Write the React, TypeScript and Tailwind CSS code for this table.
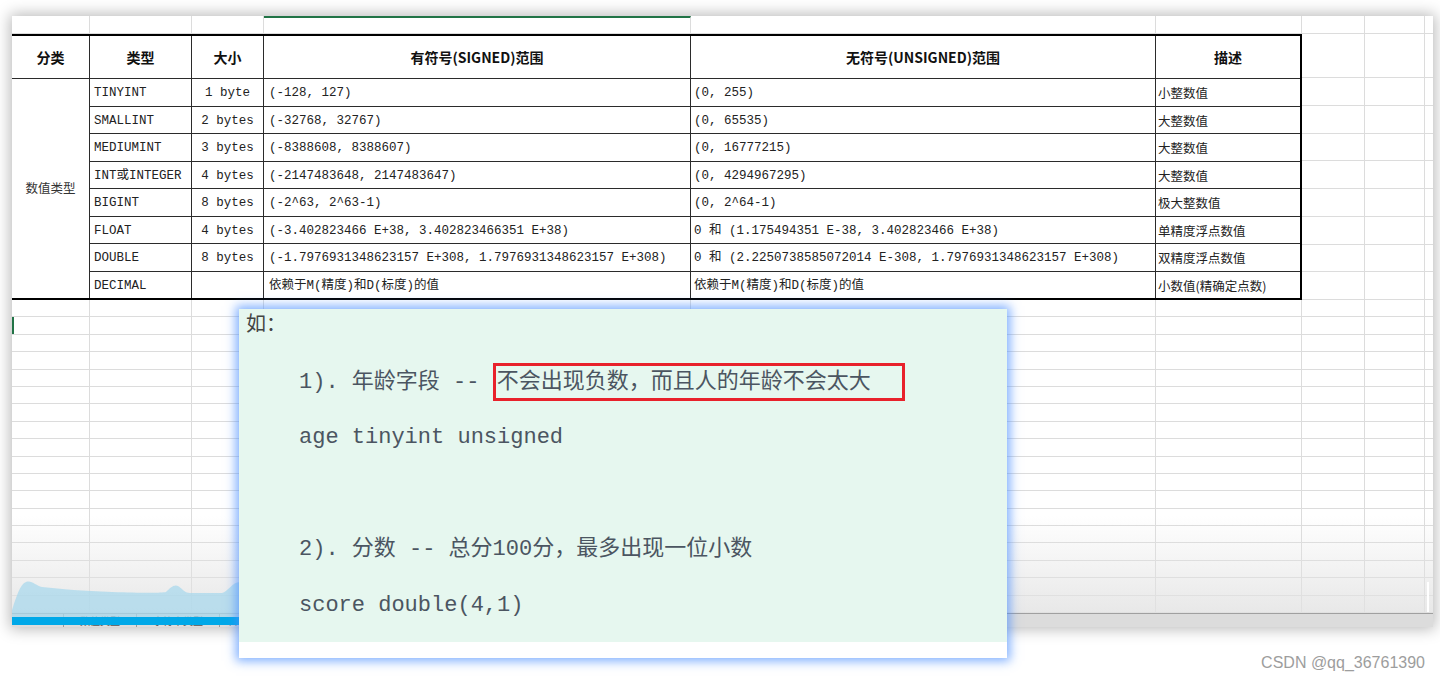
import React from "react";

const cols = [78, 102, 72, 427, 465, 146, 63, 60];

const rows: Array<[string, string, string, string, string]> = [
  ["TINYINT", "1 byte", "(-128, 127)", "(0, 255)", "小整数值"],
  ["SMALLINT", "2 bytes", "(-32768, 32767)", "(0, 65535)", "大整数值"],
  ["MEDIUMINT", "3 bytes", "(-8388608, 8388607)", "(0, 16777215)", "大整数值"],
  ["INT或INTEGER", "4 bytes", "(-2147483648, 2147483647)", "(0, 4294967295)", "大整数值"],
  ["BIGINT", "8 bytes", "(-2^63, 2^63-1)", "(0, 2^64-1)", "极大整数值"],
  [
    "FLOAT",
    "4 bytes",
    "(-3.402823466 E+38, 3.402823466351 E+38)",
    "0 和 (1.175494351 E-38, 3.402823466 E+38)",
    "单精度浮点数值",
  ],
  [
    "DOUBLE",
    "8 bytes",
    "(-1.7976931348623157 E+308, 1.7976931348623157 E+308)",
    "0 和 (2.2250738585072014 E-308, 1.7976931348623157 E+308)",
    "双精度浮点数值",
  ],
  ["DECIMAL", "", "依赖于M(精度)和D(标度)的值", "依赖于M(精度)和D(标度)的值", "小数值(精确定点数)"],
];

const headers = ["分类", "类型", "大小", "有符号(SIGNED)范围", "无符号(UNSIGNED)范围", "描述"];

function GridRow({ h, top }: { h: string; top?: boolean }) {
  return (
    <div className={`flex ${h}`}>
      {cols.map((w, i) => (
        <div
          key={i}
          style={{ width: w }}
          className={
            top && i === 3
              ? "shrink-0 border-r border-b border-[#dcdcdc] border-t-2 border-t-[#217346]"
              : "shrink-0 border-r border-b border-[#dcdcdc]"
          }
        />
      ))}
      <div className="flex-1 border-b border-[#dcdcdc]" />
    </div>
  );
}

export default function App() {
  const mono = "font-['Liberation_Mono','Noto_Sans_CJK_SC',monospace]";
  return (
    <div className="relative w-[1440px] h-[681px] bg-white overflow-hidden pt-[16px] pl-[12px]">
      {/* spreadsheet window */}
      <div className="relative w-[1421px] h-[611px] bg-white overflow-hidden shadow-[0_0_14px_2px_rgba(0,0,0,0.28)]">
        <GridRow h="h-[18px]" top />

        <div className="flex">
          <div
            className={`grid grid-cols-[77px_101px_71px_426px_464px_144px] grid-rows-[42px_repeat(8,26.5px)] gap-px bg-[#2b2b2b] border-t-2 border-b-2 border-r-2 border-black ${mono} text-[12.5px] text-[#222]`}
          >
            {headers.map((t) => (
              <div
                key={t}
                className="bg-white flex items-center justify-center font-['Noto_Sans_CJK_SC',sans-serif] font-bold text-[14px] text-[#111]"
              >
                {t}
              </div>
            ))}
            <div className="row-span-8 bg-white flex items-center justify-center font-['Noto_Sans_CJK_SC',sans-serif] text-[12.5px] text-[#333]">
              数值类型
            </div>
            {rows.map((r) => (
              <React.Fragment key={r[0]}>
                <div className="bg-white flex items-center pl-1 pt-[3px] whitespace-pre">{r[0]}</div>
                <div className="bg-white flex items-center justify-center pt-[3px] whitespace-pre">{r[1]}</div>
                <div className="bg-white flex items-center pl-[5px] pt-[3px] whitespace-pre">{r[2]}</div>
                <div className="bg-white flex items-center pl-[3px] pt-[3px] whitespace-pre">{r[3]}</div>
                <div className="bg-white flex items-center pl-[2px] pt-[3px] whitespace-pre font-['Noto_Sans_CJK_SC',sans-serif]">
                  {r[4]}
                </div>
              </React.Fragment>
            ))}
          </div>
          <div className="flex-1 grid grid-cols-[63px_60px_1fr] grid-rows-[44px_repeat(8,27.75px)]">
            {Array.from({ length: 27 }).map((_, i) => (
              <div
                key={i}
                className={i % 3 === 2 ? "border-b border-[#dcdcdc]" : "border-r border-b border-[#dcdcdc]"}
              />
            ))}
          </div>
        </div>

        {Array.from({ length: 18 }).map((_, i) => (
          <GridRow key={i} h="h-[17.4px]" />
        ))}

        {/* sheet tab bar */}
        <div className="h-[14px] bg-[#dcdcdc] border-t border-[#a0a0a0] flex items-center text-[10px] text-[#555] font-['Noto_Sans_CJK_SC',sans-serif] leading-[12px]">
          <div className="w-[52px] h-full border-r border-[#9a9a9a]" />
          <div className="px-4 h-full border-r border-[#9a9a9a] flex items-center">数值类型</div>
          <div className="px-4 h-full border-r border-[#9a9a9a] flex items-center">字符串类型</div>
          <div className="px-2 h-full flex items-center">日</div>
        </div>

        {/* video overlay: fade, waveform, progress */}
        <div className="absolute left-0 right-0 top-[500px] h-[97px] bg-linear-to-b from-transparent to-[#e2e2e2]/80 pointer-events-none" />
        <svg className="absolute left-0 top-[562px]" width="600" height="40" viewBox="0 0 600 40">
          <path
            d="M0,32 C4,20 8,6 14,4 C20,2 24,8 30,9 C50,11 70,13 100,14 C130,15 150,15 154,14 C158,10 162,6 166,8 C170,10 172,15 178,15 L210,15 C216,14 220,4 228,4 C240,4 250,10 280,12 L600,14 L600,40 L0,40 Z"
            fill="#a9d8ec"
            fillOpacity="0.75"
          />
        </svg>
        <div className="absolute left-0 top-[601px] h-[8px] w-[600px] bg-[#00a8e8]" />
        <div className="absolute left-0 top-[301px] h-[17px] w-[2px] bg-[#217346]" />
        <div className="absolute right-[4px] top-[566px] h-[30px] w-[2px] bg-white" />
      </div>

      <div className="flex justify-end pr-[15px] mt-[27px] text-[16px] leading-[18px] text-[#9d9d9d] font-['Liberation_Sans',sans-serif]">
        CSDN @qq_36761390
      </div>

      {/* popup note */}
      <div className="absolute left-[239px] top-[309px] w-[768px] h-[349px] bg-white shadow-[0_0_10px_3px_rgba(70,140,255,0.7)]">
        <div
          className={`h-[333px] bg-[#e6f7ef] pt-[3px] ${mono} text-[22px] text-[#4b5561] whitespace-pre`}
        >
          <div className="h-[28px] leading-[28px] pl-[7px] text-[20px] text-[#444]">如：</div>
          <div className="mt-[14px] pl-[60px]">
            <div className="h-[56px] flex items-center">
              <span>1). 年龄字段 -- </span>
              <span className="inline-flex items-center h-[38px] border-[3px] border-[#e8212b] pl-px pr-[31px]">
                不会出现负数，而且人的年龄不会太大
              </span>
            </div>
            <div className="h-[56px] leading-[56px]">age tinyint unsigned</div>
            <div className="h-[56px]" />
            <div className="h-[56px] leading-[56px]">2). 分数 -- 总分100分，最多出现一位小数</div>
            <div className="h-[56px] leading-[56px]">score double(4,1)</div>
          </div>
        </div>
      </div>
    </div>
  );
}
